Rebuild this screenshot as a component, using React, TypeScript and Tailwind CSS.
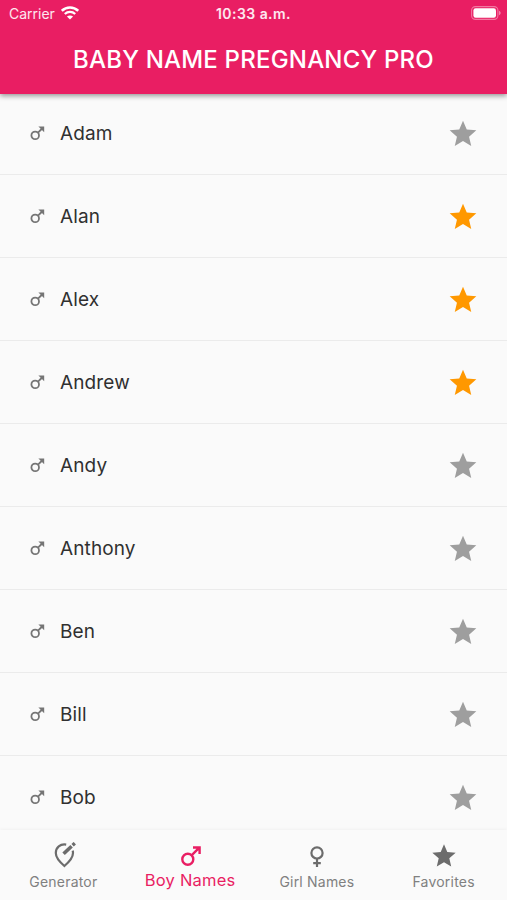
import React from 'react';
import { clsx } from 'clsx';

interface IconProps {
  className?: string;
}

interface BabyName {
  name: string;
  favorite: boolean;
}

const names: BabyName[] = [
  { name: 'Adam', favorite: false },
  { name: 'Alan', favorite: true },
  { name: 'Alex', favorite: true },
  { name: 'Andrew', favorite: true },
  { name: 'Andy', favorite: false },
  { name: 'Anthony', favorite: false },
  { name: 'Ben', favorite: false },
  { name: 'Bill', favorite: false },
  { name: 'Bob', favorite: false },
];

const StarIcon: React.FC<IconProps> = ({ className }) => (
  <svg viewBox="0 0 24 24" fill="currentColor" className={className}>
    <path d="M12 17.27 18.18 21l-1.64-7.03L22 9.24l-7.19-.61L12 2 9.19 8.63 2 9.24l5.46 4.73L5.82 21z" />
  </svg>
);

const MaleIcon: React.FC<IconProps> = ({ className }) => (
  <svg viewBox="0 0 20 20" fill="none" stroke="currentColor" strokeWidth="2.4" className={className}>
    <circle cx="6.8" cy="13.2" r="5.5" />
    <path d="M10.8 9.2 17.8 2.2M12 1.5h6.6V8" />
  </svg>
);

// Smaller mark used in the list, with a solid arrow head
const MaleListIcon: React.FC<IconProps> = ({ className }) => (
  <svg viewBox="0 0 15 15" fill="none" stroke="currentColor" strokeWidth="1.8" className={className}>
    <circle cx="5.2" cy="9.4" r="3.8" />
    <path d="M8 6.7 12.2 2.5" />
    <path d="M8.4.5h5.8v5.8z" fill="currentColor" stroke="none" />
  </svg>
);

const FemaleIcon: React.FC<IconProps> = ({ className }) => (
  <svg viewBox="0 0 14 21" fill="none" stroke="currentColor" strokeWidth="2.2" className={className}>
    <circle cx="7" cy="6.9" r="5.6" />
    <path d="M7 12.5V21M3.2 17.2h7.6" />
  </svg>
);

const GeneratorIcon: React.FC<IconProps> = ({ className }) => (
  <svg viewBox="0 0 22 26" fill="none" stroke="currentColor" className={className}>
    <path d="M12.2 2.6C6.2 1.6 1.8 5.6 1.8 11c0 4.7 2.9 8.1 8.6 13 5.7-4.9 8.6-8.3 8.6-13 0-1-.1-1.7-.3-2.4" strokeWidth="2.2" />
    <path d="M9.6 11.8 17.6 4.2" strokeWidth="3.6" />
    <path d="M18.6 3.2 20.8 1.2" strokeWidth="3.4" />
  </svg>
);

const WifiIcon: React.FC<IconProps> = ({ className }) => (
  <svg viewBox="0 0 18 14" fill="none" stroke="currentColor" className={className}>
    <path d="M.8 4.8c4.6-4.4 11.8-4.4 16.4 0" strokeWidth="2.6" />
    <path d="M3.8 8c3-2.8 7.4-2.8 10.4 0" strokeWidth="2.3" />
    <path d="M9 13.6 5.9 10.5c1.7-1.5 4.5-1.5 6.2 0z" fill="currentColor" stroke="none" />
  </svg>
);

const BatteryIcon: React.FC<IconProps> = ({ className }) => (
  <svg viewBox="0 0 30 14" className={className}>
    <rect x=".6" y=".6" width="26.3" height="12.8" rx="3.8" fill="none" stroke="white" strokeOpacity=".4" strokeWidth="1.1" />
    <rect x="2.4" y="2.3" width="22.6" height="9.4" rx="2.2" fill="white" />
    <path d="M28 4.8c2.2.8 2.2 3.6 0 4.4z" fill="white" fillOpacity=".45" />
  </svg>
);

const tabs = [
  { label: 'Generator', icon: <GeneratorIcon className="ml-[3px] h-[26px] w-[22px]" /> },
  { label: 'Boy Names', icon: <MaleIcon className="ml-px mt-[4px] size-5" />, active: true },
  { label: 'Girl Names', icon: <FemaleIcon className="ml-px mt-[4px] h-[21px] w-[14px]" /> },
  { label: 'Favorites', icon: <StarIcon className="size-7" /> },
];

const Header: React.FC = () => (
  <header className="relative z-10 h-[94px] shrink-0 bg-[#e91e63] text-white shadow-[0_2px_5px_rgba(0,0,0,0.4)]">
    <div className="grid h-[26px] grid-cols-3 items-center pr-[6px] pl-[9px] text-[14px] text-white/90">
      <div className="flex items-center gap-[6px]">
        <span>Carrier</span>
        <WifiIcon className="h-[14px] w-[18px] text-white" />
      </div>
      <span className="-ml-[3px] pt-px text-center text-[14px] font-semibold tracking-[0.45px] whitespace-nowrap">
        10:33 a.m.
      </span>
      <BatteryIcon className="h-[14px] w-[30px] justify-self-end" />
    </div>
    <h1 className="mt-[16px] text-center text-2xl leading-9 font-medium tracking-[0.2px] whitespace-nowrap">
      BABY NAME PREGNANCY PRO
    </h1>
  </header>
);

export default function App() {
  return (
    <div className="flex h-[900px] w-[507px] flex-col overflow-hidden bg-[#fafafa] font-[Inter,'Liberation_Sans',sans-serif]">
      <Header />
      <ul className="-mt-[2px] min-h-0 flex-1 overflow-hidden">
        {names.map(({ name, favorite }) => (
          <li key={name} className="flex h-[83px] items-center border-b border-[#ebebeb] pr-7 pl-[30px]">
            <MaleListIcon className="size-[15px] text-[#757575]" />
            <span className="ml-[15px] flex-1 pt-[2px] text-[19px] tracking-[0.12px] text-[#303030]">{name}</span>
            <StarIcon className={clsx('mt-px size-8', favorite ? 'text-[#ff9800]' : 'text-[#9e9e9e]')} />
          </li>
        ))}
      </ul>
      <nav className="z-10 grid h-[70px] shrink-0 grid-cols-4 bg-[#fafafa] shadow-[0_-1px_3px_rgba(0,0,0,0.04)]">
        {tabs.map(({ label, icon, active }) => (
          <div
            key={label}
            className={clsx('flex flex-col items-center pt-[12px]', active ? 'text-[#e91e63]' : 'text-[#6c6c6c]')}
          >
            <div className="flex h-[26px] justify-center">{icon}</div>
            <span
              className={clsx(
                'whitespace-nowrap leading-6',
                active ? 'text-[16.5px] tracking-[0.2px]' : 'pt-[2px] text-[14px] tracking-[0.2px] text-[#808080]',
              )}
            >
              {label}
            </span>
          </div>
        ))}
      </nav>
    </div>
  );
}
